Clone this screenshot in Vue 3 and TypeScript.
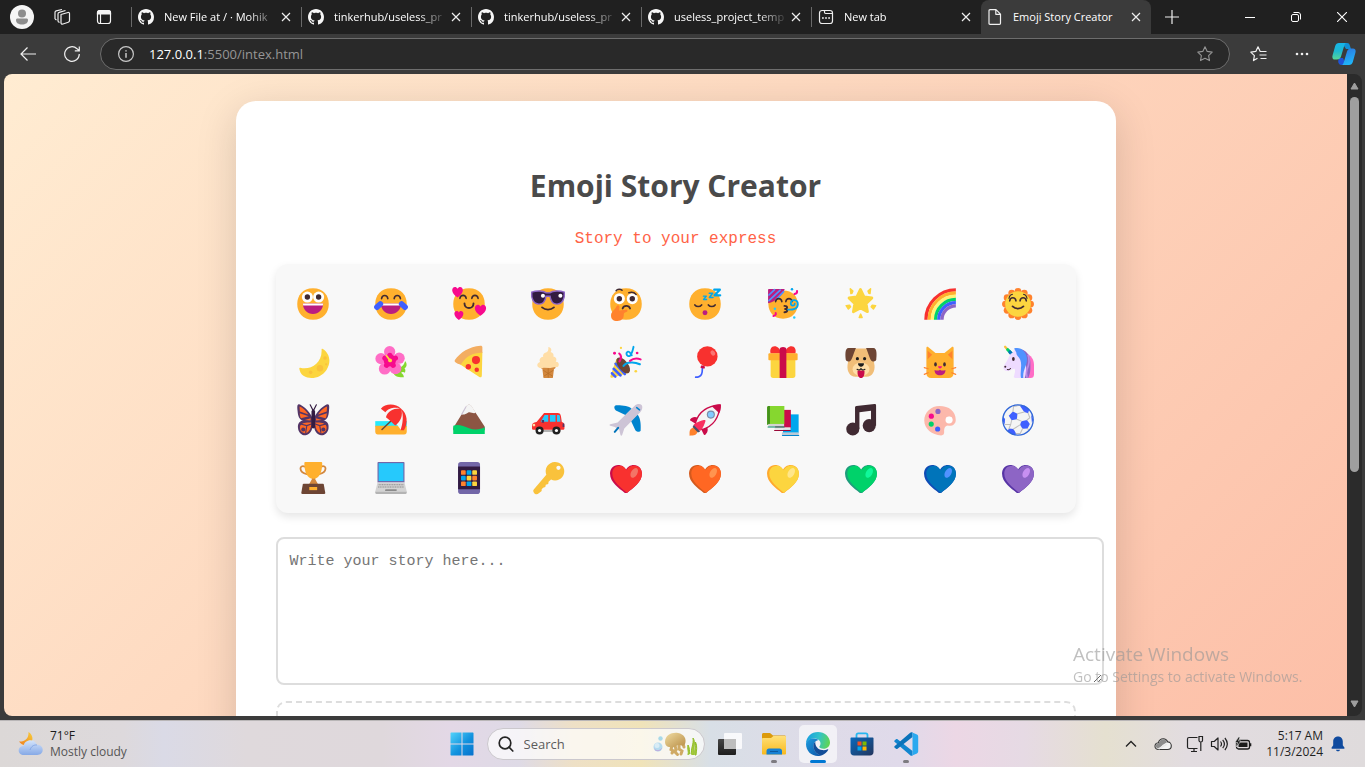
<script setup lang="ts">
import { ref } from 'vue'

interface Emoji {
  char: string
  name: string
  art: string
}

interface Tab {
  title: string
  icon: 'github' | 'newtab' | 'file'
  active?: boolean
}

const tabs: Tab[] = [
  { title: 'New File at / · Mohik', icon: 'github' },
  { title: 'tinkerhub/useless_pr', icon: 'github' },
  { title: 'tinkerhub/useless_pr', icon: 'github' },
  { title: 'useless_project_temp', icon: 'github' },
  { title: 'New tab', icon: 'newtab' },
  { title: 'Emoji Story Creator', icon: 'file', active: true },
]

const address = ref('127.0.0.1:5500/intex.html')
const story = ref('')

const INK = '#402A32'
const face =
  '<path d="M16 30c9.3 0 14-6.3 14-14S25.300 2 16 2 2 8.300 2 16s4.700 14 14 14Z" fill="#FFB02E"/>'

const dot = (x: number, y: number, r: number, c: string) =>
  `<circle cx="${x}" cy="${y}" r="${r}" fill="${c}"/>`

const line = (d: string, c: string, w: number) =>
  `<path d="${d}" fill="none" stroke="${c}" stroke-width="${w}" stroke-linecap="round" stroke-linejoin="round"/>`

const fill = (d: string, c: string) => `<path d="${d}" fill="${c}"/>`

const eye = (x: number, y: number) => dot(x, y, 4.9, '#fff') + dot(x, y, 2.4, INK)

const happyEye = (x: number, y: number) =>
  line(`M${x - 2.8} ${y + 1.2}c.6-3.600 5-3.600 5.600 0`, INK, 1.4)

const bigSmile =
  fill('M7 15.500h18c0 5.300-4 9.300-9 9.300s-9-4-9-9.300Z', '#BB1D80') +
  fill('M7 15.500h18l-.3 1.800H7.300Z', '#fff')

const smallHeart = (x: number, y: number, s: number) =>
  `<path transform="translate(${x} ${y}) scale(${s})" d="M0 5C-3 3-5 .5-5-1.800-5-5-1.500-6 0-3.300 1.500-6 5-5 5-1.800 5 .5 3 3 0 5Z" fill="#F70A8D"/>`

const heart = (main: string, shade: string, glow: string) =>
  fill('M9 4.400C4.700 4.400 1.800 8 1.800 12c0 8 8 13 13.200 17.300h2C22 25 30.200 20 30.200 12c0-4-3-7.600-7.200-7.600-3.500 0-6 2-7 4.300-1-2.300-3.500-4.300-7-4.300Z', shade) +
  fill('M10.500 5C6.300 5 3.800 8.200 3.800 12c0 7.500 7.700 12.300 12.900 17.100C22 25 30.200 20 30.200 12c0-4-3-7.200-7-7.200-3.300 0-5.600 1.900-6.600 4.400C15.500 6.900 13.500 5 10.500 5Z', main) +
  `<ellipse cx="23.300" cy="11.500" rx="2.800" ry="4.700" transform="rotate(30 23.300 11.500)" fill="${glow}"/>`

const rays = Array.from({ length: 12 }, (_, i) => {
  const a = (i * Math.PI) / 6
  return dot(16 + 11.200 * Math.cos(a), 16 + 11.200 * Math.sin(a), 3, '#FF822D')
}).join('')

const rainbow = ['#F8312F', '#FFB02E', '#FFF478', '#00D26A', '#3F5FFF', '#8D65C5']
  .map((c, i) => {
    const r = 26.6 - i * 2.85
    return `<path d="M${30.1 - r} 30A${r} ${r} 0 0 1 30.100 ${30 - r}" fill="none" stroke="${c}" stroke-width="2.950"/>`
  })
  .join('')

const wing =
  fill('M15.500 14C12.500 7 6 2.200 3.300 1.900 1.700 2 2 5 2.300 8c.3 4.500 1.500 8 5 8.500-4 .5-5 3.500-4.600 6.800.5 4.500 3.800 6.600 6.800 6.300 4-.5 6-5 6-8Z', '#533566') +
  fill('M4 4c3 1 6.500 4.500 8 7.200L4.300 8.500ZM4.200 10l8 2.600-6.900 1.900C4.700 13.500 4.300 12 4.200 10ZM14 14.500l-.3 2-5-.6Z', '#FF6723') +
  fill('M14.500 18.200c.3 4.500-2 9.300-5.500 9.500-3 .1-4.800-2.500-4.600-5.200.2-4 5.100-4.600 10.100-4.300Z', '#FF6723') +
  line('M5 19.500l5.500 1.500M10.500 21l-1 6M10.500 21l4-1.500', '#533566', 1) +
  dot(7.300, 24.500, 1.800, '#533566')

const ballPatches =
  fill('M11.500 8.500l4 2-.5 4.800-4.700 1-2.500-4Z', '#3F5FFF') +
  fill('M19 17l5-1 2.500 3.500-2 4-4.500.3-2.200-3.500Z', '#3F5FFF') +
  fill('M17.500 3l4.500.2 4 3.300-1 3.500-3.500-1.200ZM2.800 13l1.700 2-.3 4.800-2-3ZM8 23.500l4 .5 2.300 4-.8 1.500C11 29 8.500 27.500 6.800 25.500ZM27.600 11l2 4.500-1.200 3Z', '#3F5FFF') +
  line('M11.500 8.500 12 4l5.500-1M15.500 10.500 21.500 8.800M25 10l1.500 4-2.500 2M15 15.300 19 17M10.300 16.300 9.500 20 4.500 20M9.500 20 8 23.500M12 24l5.800-3.700M20 23.800 18 28l-3.700 0M24.500 23.500l1.500 2', '#BEBEBE', 0.9)

const phoneApps = ['#FF822D', '#00A6ED', '#FCD53F', '#00A6ED', '#FCD53F', '#FF822D', '#FF822D', '#00A6ED', '#FCD53F']
  .map((c, i) => `<rect x="${8.9 + (i % 3) * 5}" y="${9 + Math.floor(i / 3) * 5}" width="4.200" height="4.200" rx=".8" fill="${c}"/>`)
  .join('')

const emojis: Emoji[] = [
  { char: '😀', name: 'Grinning face', art: face + eye(11, 9.8) + eye(21, 9.8) + bigSmile },
  {
    char: '😂', name: 'Tears of joy',
    art: face + happyEye(10.4, 10) + happyEye(21.6, 10) + bigSmile +
      line('M6.500 16 3.500 18.800', '#3F5FFF', 5) + line('M25.500 16l3 2.800', '#3F5FFF', 5),
  },
  {
    char: '🥰', name: 'Smiling with hearts',
    art: face + happyEye(10.7, 9.800) + happyEye(21.300, 9.800) + line('M12 15.500c0 5.500 8 5.500 8 0', INK, 1.7) +
      smallHeart(5.800, 5.500, 0.95) + smallHeart(26.200, 21.500, 1) + smallHeart(7, 26.200, 0.8),
  },
  {
    char: '😎', name: 'Sunglasses',
    art: face +
      '<path d="M1.500 5.500c4-1.500 10-1.500 13 .6h3c3-2.100 9-2.100 13-.6.5 5.500-1.500 10.600-6.500 10.600-4 0-5.600-3-6.200-7h-3.600c-.6 4-2.200 7-6.200 7-5 0-7-5.100-6.500-10.600Z" fill="#321B41" stroke="#8D65C5" stroke-width="1.300"/>' +
      dot(11.500, 8.600, 1.800, '#fff') + dot(27, 8.600, 1.800, '#fff') + line('M10.700 19c3 2.600 7.600 2.600 10.600 0', INK, 1.6),
  },
  {
    char: '🤔', name: 'Thinking face',
    art: face + eye(10.1, 11.3) + eye(21.6, 11.3) + line('M7.200 4.200c1.200-1.700 4-1.700 5.300-.4M18.500 6c2.500-.8 5-.2 6.500 1.500', INK, 1.3) +
      line('M13 20c1-3 5.600-3 6.600 0', INK, 1.6) +
      fill('M7.600 18c.7-1.400 2.800-1 2.600 1l-.3 2.700 5.700-.7c2-.2 2.300 1.800.6 2.200-1.700.4-2.200 1-2.200 2.600 0 3.200-2 5.300-5.600 5.300-4 0-5.800-2-5.700-5.200.1-3.200 3.600-4.600 4.900-7.900Z', '#FF822D'),
  },
  {
    char: '😴', name: 'Sleeping face',
    art: face + line('M7 16.800c1.500 1.900 4.500 1.900 6 0M19 16.800c1.500 1.900 4.500 1.900 6 0', INK, 1.5) + dot(16, 23.7, 2.2, '#BB1D80') +
      line('M24.200 3.300h5l-4.700 5h5', '#00A6ED', 2) + line('M19.800 6.500h3l-2.900 3.700h3.200', '#00A6ED', 1.4) + line('M14.600 9h2.600l-2.500 3h2.700', '#00A6ED', 1.2),
  },
  {
    char: '🥳', name: 'Party face',
    art: '<path d="M16 29c8.500 0 13-5.800 13-13S24.500 4 16 4 3 9 3 16s4.500 13 13 13Z" fill="#FFB02E"/>' +
      fill('M3.500 2.700h14c-1 4.500-8 11.500-14.800 12.700V3.500c0-.5.300-.8.800-.8Z', '#BB1D80') +
      line('M3.500 8 8.500 3.300M3.500 13 13.500 3.600M9.500 12.300 16.500 5', '#5092FF', 1.5) +
      happyEye(12.2, 12.7) + happyEye(21.3, 12.7) + line('M17.300 17.700c3 0 3 2.600.6 2.700 2.600.2 2.600 3-.6 3', INK, 1.7) +
      line('M20.500 21c4 .3 8.500-.4 8.700-4.700.1-4.800-6.300-4.800-6.300-.9 0 2.700 3.600 2.500 3.500.3', '#00A6ED', 1.6) +
      line('M28.500 4.500c.2 1.500-.7 2.300-2.300 2.700M9.500 24c.5 1.500-.3 2.300-2 2.700', '#F70A8D', 1.8) +
      dot(24, 2.900, 1.1, '#00A6ED') + dot(8.8, 20.3, 1.1, '#26C9FC') + dot(26, 28, 1.1, '#26C9FC'),
  },
  {
    char: '🌟', name: 'Glowing star',
    art: '<path d="m15.500 3 3.200 6.600 7 1-5.100 5.100 1.200 7.200-6.300-3.400-6.300 3.400 1.200-7.200-5.100-5.100 7-1Z" fill="#FCD53F" stroke="#FCD53F" stroke-width="2.400" stroke-linejoin="round"/>' +
      '<path d="M6.500 2.500 8.800 4.500 8 6.500l-1 .2ZM24.500 2.500l-2.300 2 .8 2 1 .2ZM2.800 17.500l3-.5 1 1.500-2 2ZM29 17.500l-3-.5-1 1.500 2 2ZM15.700 25l1.300 3h-2.600Z" fill="#FCD53F" stroke="#FCD53F" stroke-width="1.300" stroke-linejoin="round"/>',
  },
  { char: '🌈', name: 'Rainbow', art: rainbow },
  {
    char: '🌞', name: 'Sun with face',
    art: rays + dot(16, 16, 11.4, '#FCD53F') + happyEye(11.4, 12) + happyEye(20.6, 12) +
      line('M8 11c.3-2 1.700-3.400 3-3.600M24 11c-.3-2-1.700-3.400-3-3.600', INK, 1) + line('M11.200 18.200c2.500 2.500 7.100 2.500 9.600 0', INK, 1.6),
  },
  {
    char: '🌙', name: 'Crescent moon',
    art: fill('M24.400 4.300C31 8 32.500 16.500 28 23c-4.500 6.500-13.500 9.500-20.500 5.300C5.500 27 4.100 24 3.800 21.700c0-.5.4-.6.900-.5C14 23.500 24.500 17 23.600 4.800c0-.6.300-.8.8-.5Z', '#FCD53F') +
      dot(22.200, 21.600, 2.9, '#F9C23C') + dot(26.700, 12.400, 1.6, '#F9C23C') + dot(13.900, 25.200, 1.6, '#F9C23C') + dot(27.700, 18, 1, '#F9C23C'),
  },
  {
    char: '🌺', name: 'Hibiscus',
    art: fill('M18 22c4-2 6 0 8-2.500 1.500-1.500 2-2.500 2.500-4.500 1.800 2 2 5-.5 6.600 1 1 1 2.400.3 3.900-1-.8-2.500-.7-3.300 0 1.500 1 2.500 2.500 2.400 4-4 .5-9-1-9.400-4.500Z', '#86D72F') +
      dot(14.8, 6.8, 5, '#FF6DC6') + dot(7.1, 13, 5, '#FF6DC6') + dot(23.200, 12.600, 5, '#FF6DC6') + dot(10.400, 22, 5.2, '#FF6DC6') + dot(20, 21.700, 5.200, '#FF6DC6') +
      dot(15, 14.500, 5.5, '#F70A8D') + line('M15 14V10M15 14l-4.500-1.500M15 14l5-1.500M15 14l-3 5M15 14l3 5', '#F70A8D', 4.5) +
      line('M12 10.500 15 14.500', '#FCD53F', 1.6) + dot(15.200, 14.600, 1.7, '#FCD53F'),
  },
  {
    char: '🍕', name: 'Pizza',
    art: fill('M5.500 16.500C10 10.500 17 7.500 27.900 7.200L27.400 28c0 1.500-.8 1.900-2.200 1.300Z', '#FCD53F') +
      fill('M3.300 14.500C8.500 7 16 2.500 26.200 1.500c1.200 0 1.700.5 1.700 1.500v4.700c-8-.3-14.200 2.700-19 10.300-1 .7-5.400-1.500-5.600-2.400Z', '#F3AD61') +
      dot(22.200, 14.300, 3.6, '#F8312F') + dot(15.400, 20.200, 2.4, '#F8312F') + dot(22.900, 22.900, 2, '#F8312F'),
  },
  {
    char: '🍦', name: 'Ice cream',
    art: fill('M9.500 19.500h13.300c0 1.700-.5 2.500-1.500 2.700l-1 8h-8.300l-1-8c-1-.3-1.500-1-1.500-2.700Z', '#D3883E') +
      line('M12 23.500l8 5M20.500 23.500l-8 5M16.200 22v7.500', '#B97028', 0.7) +
      fill('M16.300 2.700c2.600.2 3.400 3 2 4.300 2.200.6 3.200 2.300 2.400 4.200 2.700.4 3.400 3 2.200 4.500 2.300 0 3.100 1.800 2.600 3.300-.4 1.300-1.500 1.500-3 1.500l-4.500.8-6-.2c-1.700 1-4.500.2-5.300-1.300-.7-1.700.2-3.400 2.200-3.900-1-2 .4-4.200 2.800-4.500-.6-2 .8-3.500 2.500-3.900 1.500-.5 2.300-1.500 2.100-4.800Z', '#FFDEA7'),
  },
  {
    char: '🎉', name: 'Party popper',
    art: fill('M7.500 13 17.500 26 3.500 30c-1.300.2-1.500-.8-1.300-1.500Z', '#FCD53F') +
      line('M6.700 17.500 15 26.800M5 22l6.200 6M3.500 26l3 3', '#3F5FFF', 2.2) +
      '<ellipse cx="13.500" cy="19" rx="4.300" ry="8.300" transform="rotate(-38 13.500 19)" fill="#6D4534"/>' +
      line('M10.200 15.500c2-3 1.500-5.500-.2-7', '#F70A8D', 1.9) + line('M13.800 19.500c3-4 10-3.600 14.500-1.500', '#00A6ED', 1.9) + line('M19.500 15c2.500-2 6-2.600 9.500-1.300', '#F70A8D', 1.8) +
      line('M22.700 2.500c-.7 3-1.200 6-3.200 8-2.800 1.500-4.300-3-1.700-3.700 2-.3 2.300 2.200 3.300 3.200', '#00A6ED', 1.7) +
      dot(5.800, 8.200, 1.3, '#F70A8D') + dot(11.500, 3.500, 1, '#FCD53F') + dot(25.900, 8, 1.2, '#F70A8D') + dot(24.700, 24.200, 1.2, '#FCD53F'),
  },
  {
    char: '🎈', name: 'Balloon',
    art: line('M13.700 21c0 4.500-.2 8.500-6 8.500', '#3F5FFF', 1.5) + fill('M12.500 19h3l.5 2.500c-1.500.5-3 .3-4-.3Z', '#CA0B4A') +
      dot(18.100, 11, 9.1, '#F8312F') + '<ellipse cx="23" cy="8" rx="1.800" ry="2.500" transform="rotate(-35 23 8)" fill="#FA7573"/>',
  },
  {
    char: '🎁', name: 'Gift',
    art: fill('M8.500 2C11 2 13.500 4 14.500 8.500H5C4 5 5.500 2 8.500 2ZM23.500 2C21 2 18.500 4 17.500 8.500H27C28 5 26.500 2 23.500 2Z', '#F8312F') +
      fill('M5 14h22v14c0 1.500-.8 2.200-2.200 2.200H7.200C5.800 30.200 5 29.500 5 28Z', '#FCD53F') + fill('M3 9.300c0-.6.400-1 1-1h24c.6 0 1 .4 1 1v4.200c0 .6-.4 1-1 1H4c-.6 0-1-.4-1-1Z', '#FFB02E') +
      fill('M13 4.500c0-2.500 6-2.500 6 0v25.700h-6Z', '#CA0B4A'),
  },
  {
    char: '🐶', name: 'Dog face',
    art: fill('M9 4h14c3 5 4.500 10 5 15 .5 5-2 10-7 10h-10c-5 0-7.500-5-7-10 .5-5 2-10 5-15Z', '#F1BE78') +
      fill('M5 3.500h6.500C9.500 8 8 14 6.500 15c-1.500.8-3.500.6-4-.7C2 10 1.500 3.500 5 3.500ZM27 3.500h-6.500c2 4.500 3.500 10.500 5 11.500 1.500.8 3.500.6 4-.7.5-4.300 1-10.800-2.500-10.800Z', '#6D4534') +
      '<ellipse cx="16" cy="22.500" rx="7.500" ry="6" fill="#FFDEA7"/>' +
      dot(12.800, 13, 1.4, '#1C1C1C') + dot(19.200, 13, 1.4, '#1C1C1C') + fill('M13.500 17h5c.7 1.700-1.500 3.200-2.500 3.200s-3.200-1.500-2.500-3.200Z', '#1C1C1C') +
      fill('M13 23.500h6c.5 4-.8 6.700-3 6.700s-3.500-2.700-3-6.700Z', '#CA0B4A') + line('M12.500 22.500c1.500.9 3 .8 3.500-.8.5 1.600 2 1.700 3.500.8', '#1C1C1C', 1),
  },
  {
    char: '😺', name: 'Grinning cat',
    art: fill('M3.900 3.500c0-1 1-1.300 1.800-.6L12 8h8l6.300-5.100c.8-.7 1.800-.4 1.800.6V26c0 2.800-1.700 4.200-4.300 4.200H8.200c-2.600 0-4.300-1.400-4.300-4.200Z', '#FFB02E') +
      fill('M5 6l4 3.500-4 4ZM27 6l-4 3.500 4 4Z', '#FF822D') + '<ellipse cx="12" cy="18.200" rx="1.200" ry="1.900" fill="#402A32"/><ellipse cx="20" cy="18.200" rx="1.200" ry="1.900" fill="#402A32"/>' +
      fill('M14.300 19.800h3.400c.3 1-1 2-1.700 2s-2-1-1.700-2Z', '#F70A8D') + fill('M11.200 23c1.700.9 3.700.8 4.800-.2 1.100 1 3.100 1.100 4.800.2.2 3-2 4.700-4.800 4.700S11 26 11.200 23Z', '#BB1D80') +
      line('M2 21l3.500 1M2 27l3.500-1.500M30 21l-3.500 1M30 27l-3.500-1.500', '#FF822D', 1),
  },
  {
    char: '🦄', name: 'Unicorn',
    art: line('M4.500 2.500 6.800 5', '#F9C23C', 2) + line('M6.800 5l2 2', '#00D26A', 2.6) + line('M8.900 7.200l2 2.200', '#0074BA', 3) +
      fill('M20 7c6 1.500 10 5 10.200 11v9c0 2-1 3.200-3 3.200H19Z', '#FF6DC6') +
      fill('M16 4.500c7 0 11 5.500 11 12 0 5 .5 9-2 13.700h-8Z', '#8D65C5') +
      fill('M12 4.700c1 2-1 3-2.500 4C8 11 7 14.500 4 18.500c-2 2.800-.7 5.600 2.200 5.600 2.400 0 3.800-1.700 6.800-2.200 1 3-.5 5.800-.7 7.300 0 .7.500 1 1.200 1H22c3-8 1-18-5-21.500Z', '#EEDBFF') +
      fill('M12.500 4c6-2 11 3 11.500 9 .3 6-4 10-3.300 17.200h-2C17.500 25 20 19 18 14c-1.500-3.500-3.500-3.500-3.500-6.500Z', '#5092FF') +
      line('M25 10c2 5 .5 9-1 12.500-.8 2.500-.6 5 0 7', '#BC8AE8', 1.5) +
      '<ellipse cx="11.900" cy="13.300" rx="1.200" ry="1.700" fill="#402A32"/>' + dot(4.700, 20.200, 0.9, INK) + line('M6.500 22.700c1.300.3 2.300-.2 2.800-1', INK, 0.9),
  },
  {
    char: '🦋', name: 'Butterfly',
    art: wing + `<g transform="translate(32.500 0) scale(-1 1)">${wing}</g>` +
      line('M15.800 7 13.500 2.500M16.700 7 19 2.500', '#321B41', 1) + line('M16.250 8.500v13.500', '#321B41', 3.2),
  },
  {
    char: '🏖️', name: 'Beach',
    art: fill('M2 17h28v5H2Z', '#26EAFC') + fill('M2 21h28v5.500c0 1.500-.8 2.300-2.300 2.300H4.300C2.800 28.800 2 28 2 26.500Z', '#FFB02E') +
      line('M19 14 8 24.500', '#6D4534', 1.3) +
      fill('M7 6c6-5 13-3 18 0 3 5 4.500 12 0 19-3-4-6-8-9-11C13 11 10 8.500 7 6Z', '#F4F4F4') +
      fill('M7 6c4-5 13-5 18 0 0 0-9-3.500-14 3ZM11.500 13.500C13 8 19 5 25 5.800c2 6-.5 12-5.300 15C17 18 14 15.500 11.500 13.500ZM25 6c5.500 4 6.500 13 2.500 19l-3 0C26.500 19 27.500 12 25 6Z', '#F8312F'),
  },
  {
    char: '⛰️', name: 'Mountain',
    art: fill('M2 23 13.600 4.200c1.300-2.200 3.500-2.200 4.800 0L30 22v3H2Z', '#8C5543') + fill('M9.500 11 13.600 3.800c1.300-2 3.500-2 4.800 0L22 9.400c-2 1.600-4.700-1.300-7 .1-1.800 1.100-3.300 2-5.500 1.500Z', '#F4F4F4') +
      line('M9.500 11 13.300 4.300', '#CDC4D6', 1) + fill('M2 21c5-1.500 9 .5 14 2.300 5 1.800 10 1.200 14-.8v6H2Z', '#00D26A'),
  },
  {
    char: '🚗', name: 'Car',
    art: fill('M9 25h18v1.500H7Z', '#9B9B9B') +
      fill('M12.500 9.700h12c2 0 2.700 1 3 3l.8 5c1.700.5 2.300 1.500 2.300 3.300v2.500c0 .8-.5 1.200-1.500 1.200H3.300c-1 0-1.500-.4-1.500-1.200V21c0-2 1-3 4-3.300Z', '#F8312F') +
      fill('M13 11.500h3.200v6H9.500ZM17.700 11.500h5v6h-5ZM24 11.500h1.500c.6 0 .8.300 1 1l.6 5H24Z', '#26C9FC') +
      dot(8.500, 25.300, 3.6, '#212121') + dot(23.500, 25.300, 3.6, '#212121') + dot(8.500, 25.300, 1.4, '#fff') + dot(23.500, 25.300, 1.4, '#fff') + dot(3.500, 20.500, 1.2, '#FFDEA7') +
      fill('M29 19h1.500v3.200H29ZM10.500 16h2v2.500h-2Z', '#533566'),
  },
  {
    char: '✈️', name: 'Airplane',
    art: fill('M6.500 3c6-.2 12 .5 14.500 3l-5.500 5.500L7 7.500C5.500 6 5 4 6.500 3ZM29 25.500C29.500 19 28.500 13 26 11l-5.700 5.500 4 8.500c1.500 1.500 4 2 4.700.5Z', '#0084CE') +
      fill('M23.500 3.500c2-2 5.200-2 6.300-.9s1 4-1 6.200L14.500 23.500l-2 6c-.5.8-1.500.4-1.500-.6l-1-4.200-4-2.500-4-1c-.8-.3-.8-1.200 0-1.500l6.500-1.500Z', '#CDC4D6') +
      line('M6 26.500 9 23', '#0074BA', 1.8) + line('M25.500 5 28 7', '#0084CE', 1.4),
  },
  {
    char: '🚀', name: 'Rocket',
    art: fill('M3 24.500c1.500-2.300 4-2 5.200-.7 1.300 1.300 1.800 3.800-.7 5.300-1.500 1-4 .5-5.200.8 0-2-.3-4 .7-5.400Z', '#FF822D') +
      fill('M2.800 15.500c1-1.500 4-3 6.500-1.500l8.500 8.500c1.500 2.500 0 5.500-1.500 6.500-.7.500-1.300.3-1.500-.4L12.500 24 8 19.500l-4.700-2.800c-.6-.3-.8-.7-.5-1.200Z', '#CA0B4A') +
      '<path d="M7.500 18.500C10 10 17 3.500 29.300 2.700 28.500 15 22 22 13.500 24.500Z" fill="#F4F4F4" stroke="#CA0B4A" stroke-width="1.200"/>' +
      fill('M22 3.700c2-1 5-1.500 7.500-1.500.5 0 .7.300.7.800 0 2.500-.5 5-1.500 7Z', '#CA0B4A') +
      dot(21.200, 11.200, 3.6, '#7A8BA8') + dot(21.200, 11.200, 2.6, '#83CBFF') + fill('M6 20c3-2.500 7-3.500 9-4 1.200-.3 1.700.3 1.300 1.300-.8 2.500-2 6-4.600 8.500L6 23Z', '#F92F60') + fill('M6 20.500l5.700 5.800-2 .7L5 22.200Z', '#46506A'),
  },
  {
    char: '📚', name: 'Books',
    art: fill('M16 11h13.900v16.500H16Z', '#00A6ED') + fill('M15 27h15v2.700H15Z', '#B8C9D6') + line('M15.500 29.700H30', '#0084CE', 0.9) +
      fill('M9 7h14v16.500H9Z', '#CA0B4A') + fill('M8.500 22.500h14.200v2.300H8.500Z', '#E6E6E6') + line('M8.500 25.300h14', '#990838', 0.9) +
      fill('M1.900 5c0-1 .6-1.500 1.500-1.500h13.800v16H1.900Z', '#86D72F') + fill('M1.900 5c0-1 .6-1.500 1.500-1.500h1v16l-2.500 1Z', '#44911B') + fill('M3 19.500h14v2.300H3Z', '#D3D3D3') + line('M2.700 22.300H17', '#008463', 0.9),
  },
  {
    char: '🎵', name: 'Musical note',
    art: dot(8.700, 24, 5.8, INK) + dot(23.300, 21, 5.8, INK) + fill('M10.700 4.800c0-.7.400-1.200 1.200-1.300L28 1.800c.9 0 1.400.4 1.400 1.200V21h-4.500V7.800L14.600 9v15h-3.900Z', INK),
  },
  {
    char: '🎨', name: 'Palette',
    art: '<path fill-rule="evenodd" d="M15.500 3.500C8 3.500 2 9 2 16.500S9 29.500 17 29.700c2 0 2.800-1.300 2.700-3-.1-3 .5-5.600 3.300-5.800 4 .8 7-1.400 7-5C30 8 24 3.500 15.500 3.500ZM24.300 13a2.800 2.800 0 1 1 0 5.600 2.800 2.800 0 0 1 0-5.600Z" fill="#FCB8AB"/>' +
      dot(24, 16, 3.1, '#fff') + dot(14.200, 8.400, 2.3, '#8D65C5') + dot(8.300, 12.600, 2.3, '#F70A8D') + dot(8.200, 19.600, 2.3, '#00D26A') + dot(13.900, 24, 2.3, '#3F5FFF'),
  },
  {
    char: '⚽', name: 'Soccer ball',
    art: dot(16, 16, 13.9, '#F4F4F4') + ballPatches + '<circle cx="16" cy="16" r="13.500" fill="none" stroke="#3067D8" stroke-width="1.200"/>',
  },
  {
    char: '🏆', name: 'Trophy',
    art: line('M9 6C3.500 3.500 3 11 10.500 12.500M23 6c5.500-2.500 6 5-1.500 6.500', '#D3883E', 1.6) + fill('M15 14h3v3l2.500 4.500h-8L15 17Z', '#D3883E') +
      fill('M8.300 2.600c0-.5.300-.8.800-.8h14.300c.5 0 .8.300.8.800 0 7.500-2.200 14-7.900 14s-8-6.500-8-14Z', '#FFB02E') +
      fill('M8 21h16.500c.7 0 1 .3 1.100.8l1.300 7.400c.1.700-.2 1-.8 1H6.500c-.7 0-1-.3-.9-1l1.300-7.400c.1-.5.400-.8 1.100-.8Z', '#6D4534') + fill('M12.700 24h7v2.800h-7Z', '#FFB02E'),
  },
  {
    char: '💻', name: 'Laptop',
    art: fill('M4 2.500c0-.5.300-.7.700-.7h22.600c.4 0 .7.200.7.700v17.400H4Z', '#7367A8') + fill('M5 2.800h22v15.900H5Z', '#26C9FC') +
      fill('M4 20h24l2 8H2Z', '#D3D3D3') + fill('M2 28h28v1.200c0 .6-.4 1-1 1H3c-.6 0-1-.4-1-1Z', '#B4B4B4') +
      '<path d="M5 22h22M4.500 24h23" stroke="#8B8B8B" stroke-width="1" stroke-dasharray="1 .5"/>' + fill('M11 26h10v1.500H10.700Z', '#8B8B8B'),
  },
  {
    char: '📱', name: 'Phone',
    art: '<rect x="6.300" y="1.800" width="19.500" height="28.400" rx="2.500" fill="#7367A8"/><rect x="6.300" y="5.800" width="19.500" height="20.200" fill="#321B41"/>' + phoneApps,
  },
  {
    char: '🔑', name: 'Key',
    art: '<path fill-rule="evenodd" d="M22 1.800a8.200 8.200 0 1 1-3.300 15.600l-2.200 2-.3 2-2.200.5-.4 2.200-2 .5-1.300 1.600.1 1.300-2.600 2.100c-1.200 1.200-3.300 1-4.200-.3-1-1.300-1-2.600.1-3.600L14.500 13A8.200 8.200 0 0 1 22 1.800Z" fill="#F9C23C"/>' + dot(25.300, 6.900, 1.9, '#F8F8F8'),
  },
  { char: '❤️', name: 'Red heart', art: heart('#F8312F', '#CA0B4A', '#F37366') },
  { char: '🧡', name: 'Orange heart', art: heart('#FF6723', '#D45A1E', '#FF944F') },
  { char: '💛', name: 'Yellow heart', art: heart('#FCD53F', '#FFA92E', '#FFE68A') },
  { char: '💚', name: 'Green heart', art: heart('#00D26A', '#1E9C7C', '#10F79A') },
  { char: '💙', name: 'Blue heart', art: heart('#0074BA', '#0F4BB5', '#5092FF') },
  { char: '💜', name: 'Purple heart', art: heart('#8D65C5', '#5734A5', '#C790F1') },
]

function addEmoji(emoji: Emoji): void {
  story.value += emoji.char
}
</script>

<template>
  <div class="desktop">
    <header class="tabstrip">
      <div class="strip-tools">
        <button class="icon-btn" aria-label="Profile">
          <svg width="24" height="24" viewBox="0 0 24 24"><circle cx="12" cy="12" r="12" fill="#f5f5f5" /><circle cx="12" cy="8.500" r="4" fill="#8d8d8d" /><path d="M6 15c0-1 .7-1.500 1.500-1.500h9c.8 0 1.500.5 1.500 1.500 0 3-2.500 4.500-6 4.500S6 18 6 15Z" fill="#8d8d8d" /></svg>
        </button>
        <button class="icon-btn" aria-label="Workspaces">
          <svg width="18" height="18" viewBox="0 0 18 18" fill="none" stroke="#eee" stroke-width="1.200" stroke-linejoin="round"><path d="M8 6.500 15 4.500c1-.2 1.500.2 1.500 1v7c0 1-.4 1.500-1.200 1.700L10 16c-1.300.3-2-.2-2-1.200Z" /><path d="M5 13.500V6c0-1 .4-1.500 1.200-1.700L12.500 2.500M2 11V4.500c0-1 .4-1.500 1.200-1.700L9 1.500M5 13.500l1.500 1M2 11l1.500 1" /></svg>
        </button>
        <button class="icon-btn" aria-label="Tab actions">
          <svg width="16" height="16" viewBox="0 0 16 16" fill="none" stroke="#f5f5f5" stroke-width="1.200"><rect x="1.500" y="1.500" width="13" height="13" rx="2.500" /><path d="M1.500 3.500c0-1.200.8-2 2-2h9c1.200 0 2 .8 2 2V5h-13Z" fill="#f5f5f5" /><path d="M4.500 5v9.500" /></svg>
        </button>
      </div>
      <nav class="tabs" aria-label="Tabs">
        <div v-for="(tab, i) in tabs" :key="i" class="tab" :class="{ active: tab.active }">
          <svg v-if="tab.icon === 'github'" class="favicon" viewBox="0 0 16 16"><path fill="#f7f7f7" d="M8 0C3.580 0 0 3.580 0 8c0 3.540 2.290 6.530 5.470 7.590.4.070.550-.170.550-.380 0-.190-.010-.820-.010-1.490-2.010.370-2.530-.490-2.690-.940-.090-.230-.480-.940-.820-1.130-.280-.150-.680-.520-.010-.530.630-.010 1.080.580 1.230.820.720 1.210 1.870.870 2.330.660.070-.520.280-.870.510-1.070-1.780-.200-3.640-.890-3.640-3.950 0-.870.310-1.590.820-2.150-.080-.200-.360-1.020.080-2.120 0 0 .670-.210 2.200.820.640-.180 1.320-.270 2-.270s1.360.090 2 .270c1.530-1.040 2.200-.820 2.200-.820.440 1.100.160 1.920.080 2.120.510.560.820 1.270.820 2.150 0 3.070-1.870 3.750-3.650 3.950.290.250.540.730.540 1.480 0 1.070-.010 1.930-.010 2.200 0 .210.150.460.550.380A8.010 8.010 0 0 0 16 8c0-4.420-3.580-8-8-8z" /></svg>
          <svg v-else-if="tab.icon === 'newtab'" class="favicon" viewBox="0 0 16 16" fill="none" stroke="#eee" stroke-width="1.200"><rect x="1.500" y="1.500" width="13" height="13" rx="2.500" /><path d="M6.500 1.500v1.800c0 .8.400 1.200 1.200 1.200h6.800" /><path d="M4 9h1.800M7.100 9h1.800M10.200 9H12" stroke-width="1.600" /></svg>
          <svg v-else class="favicon" viewBox="0 0 16 16" fill="none" stroke="#f0f0f0" stroke-width="1.200" stroke-linejoin="round"><path d="M3 .7h6L13.500 5.200v9.100c0 .7-.3 1-1 1H3c-.7 0-1-.3-1-1V1.700c0-.7.3-1 1-1ZM8.800.7v4.600h4.700" /></svg>
          <span class="tab-title">{{ tab.title }}</span>
          <button class="icon-btn" :aria-label="'Close ' + tab.title">
            <svg width="10" height="10" viewBox="0 0 10 10" stroke="#eee" stroke-width="1.200"><path d="m1 1 8 8M9 1 1 9" /></svg>
          </button>
        </div>
      </nav>
      <button class="icon-btn new-tab" aria-label="New tab">
        <svg width="14" height="14" viewBox="0 0 14 14" stroke="#eee" stroke-width="1.200"><path d="M7 0v14M0 7h14" /></svg>
      </button>
      <div class="window-controls">
        <button class="icon-btn" aria-label="Minimize"><svg width="10" height="10" viewBox="0 0 10 10"><path d="M0 5.500h10" stroke="#fff" /></svg></button>
        <button class="icon-btn" aria-label="Restore"><svg width="10" height="10" viewBox="0 0 10 10" fill="none" stroke="#fff"><rect x=".5" y="2.500" width="7" height="7" rx="1.500" /><path d="M2.500.5H7c1.500 0 2.500 1 2.500 2.500v4.500" /></svg></button>
        <button class="icon-btn" aria-label="Close"><svg width="10" height="10" viewBox="0 0 10 10" stroke="#fff" stroke-width="1.100"><path d="m0 0 10 10M10 0 0 10" /></svg></button>
      </div>
    </header>

    <div class="toolbar">
      <button class="icon-btn" aria-label="Back"><svg width="16" height="16" viewBox="0 0 16 16" fill="none" stroke="#f0f0f0" stroke-width="1.200"><path d="M16 8H1M7.500 1.500 1 8l6.500 6.500" /></svg></button>
      <button class="icon-btn" aria-label="Refresh"><svg width="16" height="16" viewBox="0 0 16 16" fill="none" stroke="#f0f0f0" stroke-width="1.200"><path d="M15.300 8A7.300 7.300 0 1 1 13 2.700l2 2M15.300.5v4.400h-4.500" /></svg></button>
      <div class="address">
        <svg width="16" height="16" viewBox="0 0 16 16" fill="none" stroke="#c8c8c8" stroke-width="1.200"><circle cx="8" cy="8" r="7.400" /><path d="M8 7v4.800M8 4.200v1.400" stroke-width="1.500" /></svg>
        <a class="url" :href="'http://' + address"><b>127.0.0.1</b>:5500/intex.html</a>
        <button class="icon-btn" aria-label="Add to favorites"><svg width="16" height="16" viewBox="0 0 16 16" fill="none" stroke="#949494" stroke-width="1.100" stroke-linejoin="round"><path d="m8 .8 2.200 4.600 5 .7-3.600 3.500.9 5L8 12.200l-4.500 2.400.9-5L.8 6.100l5-.7Z" /></svg></button>
      </div>
      <div class="toolbar-right">
        <button class="icon-btn" aria-label="Favorites"><svg width="17" height="16" viewBox="0 0 17 16" fill="none" stroke="#f0f0f0" stroke-width="1.200" stroke-linejoin="round"><path d="M7.500 12.200 3.500 14.600l.9-5L.8 6.100l5-.7L8 .8l2.200 4.600M10 5.500h6.500M9.500 9h7M10.500 12.500h6" /></svg></button>
        <button class="icon-btn" aria-label="Settings and more"><svg width="14" height="4" viewBox="0 0 14 4" fill="#f0f0f0"><circle cx="2" cy="2" r="1.300" /><circle cx="7" cy="2" r="1.300" /><circle cx="12" cy="2" r="1.300" /></svg></button>
        <button class="icon-btn" aria-label="Copilot">
          <svg width="24" height="24" viewBox="0 0 24 24">
            <defs>
              <linearGradient id="cpA" x1="0" y1="0" x2="0" y2="1"><stop offset="0" stop-color="#15b5ea" /><stop offset=".5" stop-color="#1fb8cf" /><stop offset="1" stop-color="#57d696" /></linearGradient>
              <linearGradient id="cpB" x1="0" y1="0" x2=".3" y2="1"><stop offset="0" stop-color="#2e74df" /><stop offset="1" stop-color="#1fb4f8" /></linearGradient>
            </defs>
            <path d="M10 1h5c2 0 2.500 1 3 3l1 3h-5Z" fill="#118fd4" /><path d="M6.500 16H11l3 7H9.500c-2 0-2.700-1-3.300-3Z" fill="#1f53d7" />
            <path d="M7 1h7.500c-1 0-1.700.8-2.200 2.500L9 14.500C8.400 16.500 7 17.500 5 17.500H3C.8 17.500-.1 16 .6 13.300L3.200 4C3.800 2 5 1 7 1Z" fill="url(#cpA)" />
            <path d="M17 23H9.500c1 0 1.700-.8 2.200-2.500L15 9.500c.6-2 2-3 4-3h2c2.200 0 3.100 1.500 2.400 4.200L20.800 20c-.6 2-1.800 3-3.800 3Z" fill="url(#cpB)" />
          </svg>
        </button>
      </div>
    </div>

    <div class="viewport">
      <main class="page">
        <section class="card">
          <h1>Emoji Story Creator</h1>
          <p class="subtitle">Story to your express</p>
          <div class="palette">
            <button v-for="emoji in emojis" :key="emoji.char" class="emoji" :aria-label="emoji.name" @click="addEmoji(emoji)">
              <svg viewBox="0 0 32 32" v-html="emoji.art"></svg>
            </button>
          </div>
          <textarea v-model="story" class="story" aria-label="Story" placeholder="Write your story here..."></textarea>
          <div class="output">{{ story }}</div>
        </section>
      </main>
      <div class="scrollbar" aria-hidden="true">
        <svg width="9" height="8" viewBox="0 0 9 8"><path d="M4.500 1 8 7H1Z" fill="#9f9f9f" stroke="#9f9f9f" stroke-linejoin="round" /></svg>
        <div class="track"><div class="thumb"></div></div>
        <svg width="9" height="8" viewBox="0 0 9 8"><path d="M4.500 7 8 1H1Z" fill="#9f9f9f" stroke="#9f9f9f" stroke-linejoin="round" /></svg>
      </div>
    </div>

    <footer class="taskbar">
      <button class="weather">
        <svg width="26" height="26" viewBox="0 0 26 26">
          <defs><linearGradient id="cloud" x1="0" y1="0" x2="0" y2="1"><stop offset="0" stop-color="#d4e4fb" /><stop offset="1" stop-color="#86a9e6" /></linearGradient><linearGradient id="moon" x1="1" y1="0" x2="0" y2="1"><stop offset="0" stop-color="#f7cf3c" /><stop offset="1" stop-color="#f07d1c" /></linearGradient></defs>
          <path d="M10.500 1c4 2.200 5.500 8 2 11.500-3.500 3-9 2-11.500-2C6 11 11 8 10.500 1Z" fill="url(#moon)" />
          <path d="M6 24c-3.300 0-5.300-2-5.300-4.600S3 15 5.500 15c.6-3.500 3.500-5.700 7-5.700 3 0 5.300 1.700 6.200 4.500 3.500-.3 6 2 6 5 0 3.200-2.300 5.200-5.500 5.200Z" fill="url(#cloud)" /><path d="M12 19c1-3.500 4-5.500 7-5" fill="none" stroke="#7d9fe0" stroke-width=".8" />
        </svg>
        <span class="lines"><span class="temp">71°F</span><span>Mostly cloudy</span></span>
      </button>

      <div class="apps">
        <button class="app" aria-label="Start">
          <svg width="24" height="24" viewBox="0 0 24 24"><defs><linearGradient id="win" x1="0" y1="0" x2="1" y2="1"><stop offset="0" stop-color="#53d3fb" /><stop offset=".55" stop-color="#1292de" /><stop offset="1" stop-color="#0671cc" /></linearGradient></defs><path d="M1 .5h10.500V11.500H.5V1ZM12.500.5H23l.5.5v10.500h-11ZM.5 12.500h11v11H1l-.5-.5ZM12.500 12.500h11V23l-.5.5H12.500Z" fill="url(#win)" /></svg>
        </button>
        <label class="search">
          <svg width="16" height="16" viewBox="0 0 16 16" fill="none" stroke="#242424" stroke-width="1.700"><circle cx="7" cy="7" r="5.800" /><path d="m11 11.200 3.800 3.800" stroke-linecap="round" /></svg>
          <input type="text" placeholder="Search" aria-label="Search" />
          <svg width="46" height="26" viewBox="0 0 46 26">
            <defs><linearGradient id="jelly" x1="0" y1="0" x2="1" y2="1"><stop offset="0" stop-color="#f0dca2" /><stop offset="1" stop-color="#b88d45" /></linearGradient></defs>
            <circle cx="6" cy="16" r="4.500" fill="#b5dbee" /><circle cx="5" cy="14.500" r="2.500" fill="#d9ecf5" /><path d="M2.500 18c2 2.500 5.500 2 7-.5" stroke="#bfa5dc" fill="none" /><circle cx="8.500" cy="7.500" r="2.200" fill="#a8d9e8" />
            <path d="M20 15l-1 3.500 2.500 1.500-1.500 2M23 14l1 5-1 2 2.500 2.500M27 14l0 4 3 2-1 3M31 13l1 3" stroke="#cfaa65" stroke-width="3" fill="none" stroke-linecap="round" /><path d="M13 11C13 4 20 1 26 2c6 1 9 6 7 11-2 4-6-1-9 2-3 2.500-11 2-11-4Z" fill="url(#jelly)" />
            <path d="M36 24c1-4-1-6 0-10 2 3 1 6 2 9M40 24c-2-6 2-10 1-17 3 4 0 9 1 17M43 24c-1-4 1-8 .5-13 2 4 1 9 .5 13Z" fill="#a8cd39" stroke="#91bd2b" />
          </svg>
        </label>
        <button class="app" aria-label="Task view">
          <svg width="26" height="24" viewBox="0 0 26 24"><defs><linearGradient id="dark" x1="0" y1="0" x2="0" y2="1"><stop offset="0" stop-color="#464646" /><stop offset="1" stop-color="#1d1d1d" /></linearGradient></defs><rect x="1" y="7" width="18" height="16" rx="1" fill="url(#dark)" /><rect x="7" y="1" width="18" height="16" rx="1" fill="#fff" opacity=".82" /><path d="M7 7h12v10H8c-.6 0-1-.4-1-1Z" fill="#bdbdbd" /></svg>
        </button>
        <button class="app open" aria-label="File Explorer">
          <svg width="26" height="24" viewBox="0 0 26 24"><defs><linearGradient id="folder" x1="0" y1="0" x2="0" y2="1"><stop offset="0" stop-color="#ffe078" /><stop offset="1" stop-color="#f8b91d" /></linearGradient></defs><path d="M1 2.500C1 1.600 1.600 1 2.500 1H9l3 2.500h11.500c.9 0 1.500.6 1.500 1.500v7H1Z" fill="#dc9a0b" /><path d="M1 7c0-.6.4-1 1-1h8l2.500-2H24c.6 0 1 .4 1 1v16.500c0 .6-.4 1-1 1H2c-.6 0-1-.4-1-1Z" fill="url(#folder)" /><path d="M5.500 22.500V19c0-1.500 1-2.500 2.500-2.500h10.500c1.500 0 2.500 1 2.500 2.500v3.500Z" fill="#1681d3" /><path d="M9 19.500h8" stroke="#0b5a9f" /></svg>
        </button>
        <button class="app open current" aria-label="Microsoft Edge">
          <svg width="26" height="26" viewBox="0 0 26 26">
            <defs><linearGradient id="edgeTop" x1="0" y1=".4" x2="1" y2=".6"><stop offset="0" stop-color="#199fe0" /><stop offset=".5" stop-color="#32c3c8" /><stop offset="1" stop-color="#62d64e" /></linearGradient><linearGradient id="edgeLow" x1="0" y1="0" x2="1" y2="1"><stop offset="0" stop-color="#1e9de0" /><stop offset="1" stop-color="#0c51a5" /></linearGradient></defs>
            <path d="M1 13C1 5.500 6.500 1 13 1s12 4.800 12 10.500c0 3.800-3 6.300-6.300 6.300-3 0-4.400-1.200-4.400-2 0-.7 1.200-1.100 1.200-3.200 0-2.900-2.500-5.100-5.900-5.100C5.500 7.500 2 9.500 1 13Z" fill="url(#edgeTop)" />
            <path d="M1 13c.5-3.500 4-5.500 7.500-5.500 3.300 0 5 1.500 5 1.500-3 .5-5 3-5 6 0 4.500 3.500 9 8.500 9.300-1 .5-2.600.7-4 .7C6.300 25 1 20 1 13Z" fill="url(#edgeLow)" />
            <path d="M10.300 10.700C8.500 12 7.700 15 9 18.300c1.600 4.200 5.500 6.200 8 6 2.700-1 5-3 6.300-5.500.2-.5-.2-.8-.6-.6-1.700.8-3.700 1.200-5.500.9-4.300-.5-7.300-4.100-6.900-8.400Z" fill="#124d98" />
          </svg>
        </button>
        <button class="app" aria-label="Microsoft Store">
          <svg width="24" height="24" viewBox="0 0 24 24"><defs><linearGradient id="store" x1="0" y1="0" x2="1" y2="1"><stop offset="0" stop-color="#0869bd" /><stop offset="1" stop-color="#23355c" /></linearGradient></defs><path d="M6.500 7V3c0-1 .6-1.700 1.700-1.700h7.600c1.100 0 1.700.7 1.700 1.700v4" fill="none" stroke="#27b6ef" stroke-width="1.800" /><path d="M.5 6.500c0-.6.400-1 1-1h21c.6 0 1 .4 1 1V20c0 2.200-1.300 3.500-3.500 3.500H4C1.800 23.500.5 22.200.5 20Z" fill="url(#store)" /><path d="M7.500 9.500h4v4h-4Z" fill="#f25022" /><path d="M12.500 9.500h4v4h-4Z" fill="#7fba00" /><path d="M7.500 14.500h4v4h-4Z" fill="#00a4ef" /><path d="M12.500 14.500h4v4h-4Z" fill="#ffb900" /></svg>
        </button>
        <button class="app open" aria-label="Visual Studio Code">
          <svg width="26" height="26" viewBox="0 0 26 26"><path d="M1.500 9.500 3 8.200c.5-.4 1-.4 1.500 0L19.500 20v4.500c-.8.500-1.700.3-2.300-.3L1.500 10.800c-.4-.4-.4-.9 0-1.300Z" fill="#1185cf" /><path d="M1.500 16.500 3 17.800c.5.4 1 .4 1.500 0L19.500 6V1.500c-.8-.5-1.700-.3-2.300.3L1.500 15.200c-.4.4-.4.9 0 1.300Z" fill="#0b73ba" /><path d="M17.200 24.300c.9.900 2.300-.1 2.300-1V2.700c0-1-1.400-1.900-2.300-1 .5-.4 1.400-.6 2-.3l4.800 2.200c.8.400 1.200 1 1.200 1.800v15.200c0 .8-.4 1.400-1.200 1.800l-4.800 2.200c-.6.300-1.500.1-2-.3Z" fill="#2ba9ef" /></svg>
        </button>
      </div>

      <div class="tray">
        <button class="icon-btn" aria-label="Show hidden icons"><svg width="12" height="8" viewBox="0 0 12 8" fill="none" stroke="#222" stroke-width="1.300"><path d="M1 6.500 6 1.500l5 5" /></svg></button>
        <button class="icon-btn" aria-label="OneDrive"><svg width="18" height="14" viewBox="0 0 18 14"><path d="M4.500 12.500C2.500 12.500 1 11.200 1 9.200S2.500 6 4.300 5.800C5 3.300 7 1.700 9.300 1.700c2.200 0 3.700 1.300 4.400 3.200 2 0 3.600 1.700 3.600 3.800s-1.600 3.800-3.800 3.800Z" fill="#f3f3f3" stroke="#333" stroke-width="1.100" /><path d="M1.600 9C2 7 3 6.200 4.800 6 5.500 3.500 7 2.300 9.300 2.300c1.800 0 3.200 1.200 3.700 3L8.500 8 5.500 11.500C3 11.500 1.600 10.500 1.600 9Z" fill="#8c8c8c" /><path d="M4.500 12 13 7" stroke="#e8e8e8" stroke-width="1.500" /></svg></button>
        <button class="icon-btn" aria-label="Network"><svg width="18" height="18" viewBox="0 0 18 18" fill="none" stroke="#222" stroke-width="1.200"><path d="M11.500 2.500H3c-.9 0-1.500.6-1.500 1.500v8c0 .9.600 1.500 1.500 1.500h8.500M5 16.500h6M8 13.500v3M13 1.500h3.500v4c0 1-.7 1.500-1.700 1.500S13 6.500 13 5.500ZM14.800 7v9" /></svg></button>
        <button class="icon-btn" aria-label="Volume"><svg width="18" height="16" viewBox="0 0 18 16" fill="none" stroke="#222" stroke-width="1.200" stroke-linejoin="round"><path d="M1.500 5.500h2.700L8 2v12l-3.800-3.500H1.500ZM10.500 5.500c1.200 1.500 1.200 3.500 0 5M12.700 3.800c2 2.500 2 6 0 8.400M14.900 2c3 3.700 3 8.300 0 12" /></svg></button>
        <button class="icon-btn" aria-label="Battery"><svg width="18" height="16" viewBox="0 0 18 16"><rect x="2.500" y="4.500" width="13" height="8.500" rx="2" fill="none" stroke="#1b1b1b" stroke-width="1.300" /><rect x="4.500" y="6.500" width="9" height="4.500" fill="#1b1b1b" /><path d="M16 7.300h1.300v3H16Z" fill="#1b1b1b" /><path d="M4.500 1 1 6.500h2.500L2.300 11 7 5H4.500L6 1Z" fill="#1b1b1b" stroke="#ddd" stroke-width=".6" /></svg></button>
        <time class="clock lines" datetime="2024-11-03T05:17"><span>5:17 AM</span><span>11/3/2024</span></time>
        <button class="icon-btn" aria-label="Notifications"><svg width="14" height="16" viewBox="0 0 14 16" fill="#0f4a9e"><path d="M7 .5c3 0 4.800 2.200 4.800 5v3.800l1.700 2.500c.2.500 0 .9-.5.9H1c-.5 0-.7-.4-.5-.9l1.700-2.500V5.500c0-2.800 1.800-5 4.800-5ZM5 13.700h4c-.3 1-1 1.600-2 1.600s-1.700-.6-2-1.600Z" /></svg></button>
      </div>
    </footer>

    <aside class="watermark">
      <p class="wm-title">Activate Windows</p>
      <p>Go to Settings to activate Windows.</p>
    </aside>
  </div>
</template>

<style>
body {
  margin: 0;
  overflow: hidden;
}
</style>

<style scoped>
.desktop {
  display: flex;
  flex-direction: column;
  height: 100vh;
  background: #3b3b3b;
  font-family: "Open Sans", "Noto Sans", sans-serif;
  font-size: 12px;
  color: #fff;
}

button {
  padding: 0;
  border: 0;
  background: none;
  color: inherit;
  font: inherit;
}

svg {
  display: block;
  flex: none;
}

.icon-btn {
  display: flex;
  align-items: center;
  justify-content: center;
}

.tabstrip {
  display: flex;
  flex: none;
  height: 34px;
  background: #202020;
}

.strip-tools {
  display: flex;
  width: 121px;
  padding-left: 10px;
  gap: 19px;
  align-items: center;
}

.strip-tools .icon-btn {
  width: 24px;
}

.strip-tools .icon-btn:nth-child(2) {
  width: 18px;
  margin-right: 5px;
}

.strip-tools .icon-btn:nth-child(3) {
  width: 18px;
}

.tabs {
  display: flex;
}

.tab {
  position: relative;
  display: flex;
  align-items: center;
  box-sizing: border-box;
  width: 170px;
  padding: 0 10px 0 7px;
}

.tab::before {
  content: "";
  position: absolute;
  left: 0;
  top: 7px;
  width: 1px;
  height: 20px;
  background: #6a6a6a;
}

.tab.active {
  padding-left: 6px;
  background: #3b3b3b;
  border-radius: 8px 8px 0 0;
}

.tab.active::before {
  display: none;
}

.favicon {
  width: 16px;
  height: 16px;
}

.tab-title {
  flex: 1;
  margin-left: 10px;
  overflow: hidden;
  font-size: 11px;
  white-space: nowrap;
  line-height: 18px;
  mask-image: linear-gradient(to right, #000 84px, transparent 114px);
}

.active .tab-title {
  mask-image: none;
}

.tab .icon-btn {
  width: 10px;
  margin-left: 5px;
}

.new-tab {
  width: 42px;
}

.window-controls {
  display: flex;
  margin-left: auto;
}

.window-controls .icon-btn {
  width: 46px;
}

.toolbar {
  display: flex;
  flex: none;
  align-items: center;
  height: 40px;
}

.toolbar > .icon-btn {
  width: 44px;
}

.toolbar > .icon-btn:first-child {
  margin-left: 6px;
}

.address {
  display: flex;
  flex: 1;
  align-items: center;
  box-sizing: border-box;
  height: 32px;
  margin-left: 6px;
  padding: 0 16px 0 17px;
  gap: 15px;
  border: 1px solid #6d6d6d;
  border-radius: 16px;
  background: #292929;
}

.url {
  flex: 1;
  color: #969696;
  font-size: 13px;
  line-height: 20px;
  text-decoration: none;
}

.url b {
  color: #fff;
  font-weight: 400;
}

.toolbar-right {
  display: flex;
  width: 135px;
}

.toolbar-right .icon-btn {
  width: 44px;
}

.toolbar-right .icon-btn:first-child {
  margin-left: 6px;
}

.toolbar-right .icon-btn:last-child {
  width: 40px;
}

.viewport {
  display: flex;
  flex: 1;
  min-height: 0;
  margin: 0 3px 4px 4px;
  overflow: hidden;
  border-radius: 8px;
  background: #2b2b2b;
}

.page {
  flex: 1;
  box-sizing: border-box;
  height: 1040px;
  padding-top: 27px;
  background: linear-gradient(135deg, #ffecd2, #fcb69f);
}

.card {
  box-sizing: border-box;
  width: 880px;
  max-width: 100%;
  min-height: 900px;
  margin: 0 auto;
  padding: 40px;
  border-radius: 20px;
  background: #fff;
  box-shadow: 0 10px 40px rgba(0, 0, 0, 0.15);
}

h1 {
  margin: 22px 0 20px;
  color: #4a4a4a;
  font-size: 30px;
  font-weight: 700;
  line-height: 46px;
  text-align: center;
}

.subtitle {
  margin: 0 0 15px;
  color: #ff6347;
  font-family: "Liberation Mono", monospace;
  font-size: 16px;
  line-height: 20px;
  text-align: center;
}

.palette {
  display: grid;
  grid-template-columns: repeat(10, 1fr);
  grid-auto-rows: 58px;
  column-gap: 4px;
  padding: 11px 20px 6px 0;
  border-radius: 12px;
  background: #f8f8f8;
  box-shadow: 0 4px 8px rgba(0, 0, 0, 0.1);
}

.emoji {
  display: flex;
  align-items: center;
  justify-content: center;
}

.emoji svg {
  width: 36px;
  height: 36px;
}

.story {
  display: block;
  box-sizing: content-box;
  width: 100%;
  height: 120px;
  margin: 24px 0 16px;
  padding: 12px;
  border: 2px solid #ddd;
  border-radius: 8px;
  background: transparent;
  font-family: "Liberation Mono", monospace;
  font-size: 15px;
  line-height: 22px;
}

.story::placeholder {
  color: #757575;
}

.output {
  box-sizing: border-box;
  min-height: 100px;
  padding: 12px;
  border: 2px dashed #ddd;
  border-radius: 10px;
  color: #444;
  font-size: 24px;
}

.scrollbar {
  display: flex;
  flex-direction: column;
  align-items: center;
  width: 15px;
  padding: 8px 0;
  box-sizing: border-box;
}

.track {
  flex: 1;
  width: 9px;
  margin: 7px 0;
}

.thumb {
  height: 63%;
  border-radius: 5px;
  background: #9f9f9f;
}

.taskbar {
  display: grid;
  grid-template-columns: 1fr auto 1fr;
  flex: none;
  box-sizing: border-box;
  height: 47px;
  padding: 0 20px 0 18px;
  border-top: 1px solid #b9b6b7;
  background: linear-gradient(to right, #dcd8d7 0, #ddd9dc 9%, #dadae6 12%, #dfd9dc 18%, #dfd8dc 28%, #e3d8e6 33%, #dedae6 38%, #eee0c6 42%, #f0e3b9 47%, #d8dfe6 52%, #dedbe8 60%, #e0daea 66%, #ecd7e5 70%, #e6dae4 75%, #e5e0d0 81%, #e2dce0 87%, #dfdbdc 100%);
  color: #1f1f1f;
}

.weather {
  display: flex;
  align-items: center;
  gap: 6px;
  color: #555;
  text-align: left;
}

.lines {
  display: flex;
  flex-direction: column;
  line-height: 16px;
}

.temp {
  color: #1b1b1b;
}

.apps {
  display: flex;
  align-items: center;
  margin-left: 4px;
}

.app {
  position: relative;
  display: flex;
  align-items: center;
  justify-content: center;
  width: 44px;
  height: 44px;
}

.app.open::after {
  content: "";
  position: absolute;
  bottom: 3px;
  left: 19px;
  width: 6px;
  height: 3px;
  border-radius: 2px;
  background: #7d7b80;
}

.app.current::before {
  content: "";
  position: absolute;
  inset: 3px;
  border-radius: 5px;
  background: rgba(255, 255, 255, 0.6);
}

.app.current svg {
  position: relative;
}

.app.current::after {
  left: 14px;
  width: 16px;
  background: #0078d4;
}

.search {
  display: flex;
  align-items: center;
  box-sizing: border-box;
  width: 218px;
  height: 32px;
  margin: 0 3px;
  padding: 0 6px 0 10px;
  gap: 10px;
  border: 1px solid #cbc8cd;
  border-radius: 16px;
  background: rgba(255, 255, 255, 0.7);
}

.search input {
  flex: 1;
  min-width: 0;
  padding: 0;
  border: 0;
  outline: 0;
  background: none;
  color: #333;
  font: inherit;
  font-size: 13px;
}

.search input::placeholder {
  color: #5c5c5c;
}

.tray {
  display: flex;
  align-items: center;
  justify-content: flex-end;
}

.tray .icon-btn {
  width: 24px;
}

.tray .icon-btn:nth-child(-n + 2) {
  width: 32px;
}

.tray .icon-btn:nth-child(2) {
  margin-right: 4px;
}

.clock {
  width: 68px;
  text-align: right;
}

.tray .icon-btn:last-child {
  width: 14px;
  margin-left: 8px;
}

.watermark {
  position: fixed;
  right: 56px;
  bottom: 80px;
  width: 236px;
  color: rgba(150, 150, 150, 0.6);
  font-size: 14px;
  line-height: 20px;
  white-space: nowrap;
  pointer-events: none;
}

.watermark p {
  margin: 0;
}

.watermark .wm-title {
  font-size: 19px;
  line-height: 26px;
}
</style>
